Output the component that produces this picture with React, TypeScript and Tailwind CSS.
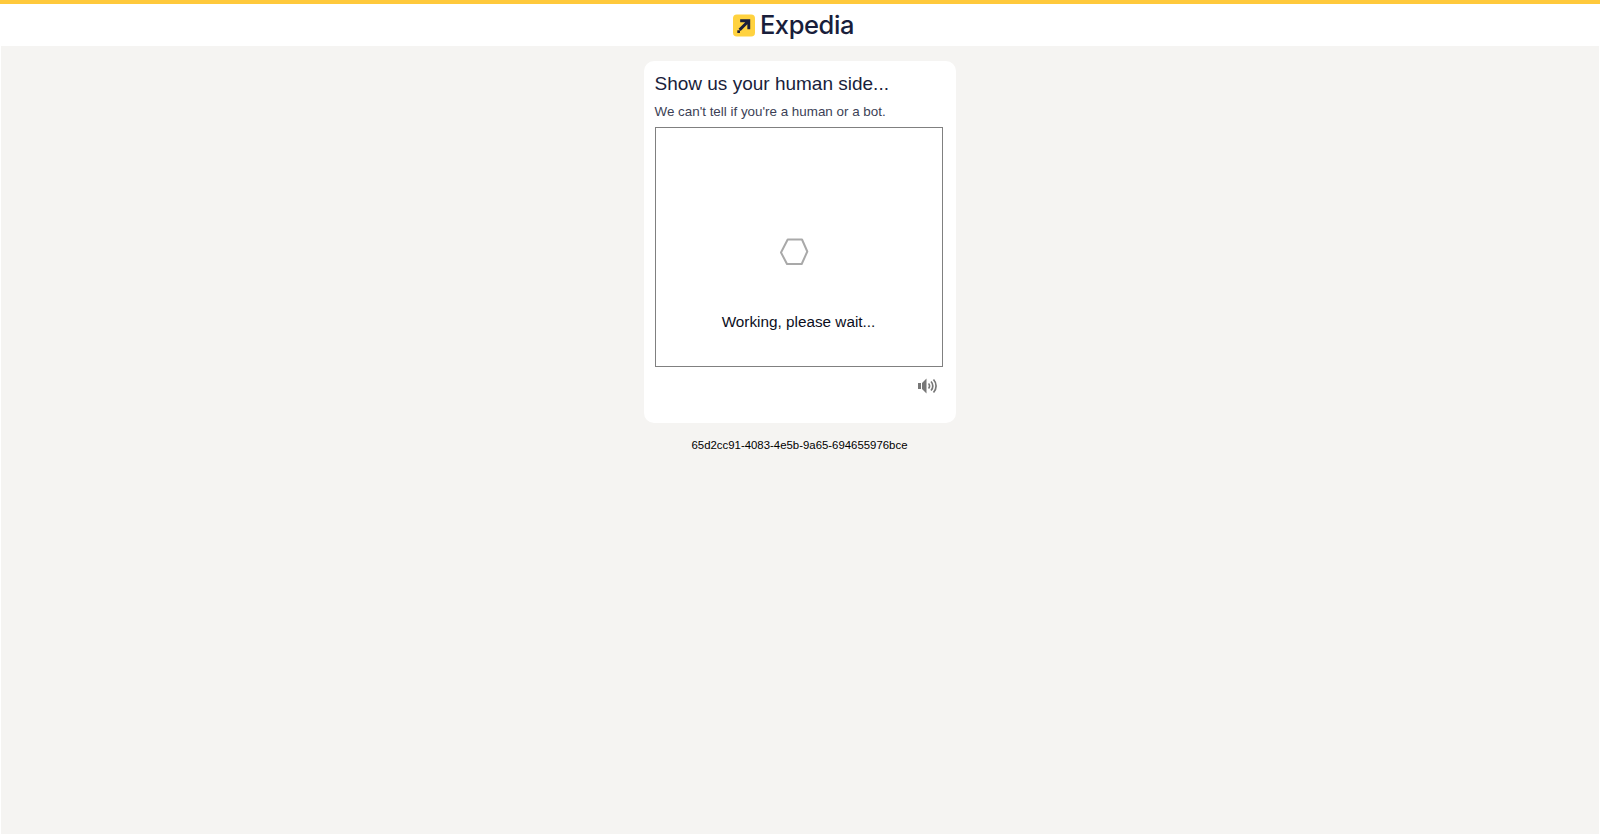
export default function App() {
  return (
    <div className="h-[834px] flex flex-col bg-white font-['Liberation_Sans',Arial,sans-serif] overflow-hidden">
      <div className="h-1 bg-[#ffc93c]" />
      <header className="h-[42px] flex items-center justify-center pr-[13px]">
        <div className="flex items-center">
          <svg width="22" height="23" viewBox="0 0 23 23" className="mr-[5px]">
            <rect x="0" y="0" width="23" height="23" rx="4" fill="#ffd23f" />
            <path d="M7.500 5h10.500v10.500h-3V10.200L8 17.200 5.800 15 12.800 8H7.500z" fill="#191e3b" />
            <rect x="4.500" y="16.500" width="2.800" height="2.800" fill="#191e3b" />
          </svg>
          <span className="font-['Inter',sans-serif] font-medium text-[25.5px] leading-none text-[#191e3b] tracking-[-0.4px] pb-[1px]">Expedia</span>
        </div>
      </header>
      <main className="flex-1 mx-px bg-[#f5f4f2] flex flex-col items-center pt-[15px] pr-px">
        <div className="w-[312px] h-[362px] rounded-[10px] bg-white pl-[11px] pr-[13px] pt-[11px]">
          <h1 className="text-[19px] leading-[24px] text-[#191e3b]">Show us your human side...</h1>
          <p className="mt-[6px] text-[13.4px] leading-[20px] text-[#3c3f56]">We can't tell if you're a human or a bot.</p>
          <div className="mt-[5px] w-[288px] h-[240px] border border-[#808080] flex flex-col items-center">
            <svg width="30" height="28" viewBox="0 0 30 28" className="mt-[110px] mr-[10px]">
              <path d="M8.700 1.500h14.300L28.300 13.500 22.700 26H8L2 14.500z" fill="none" stroke="#a9a9a9" strokeWidth="2" strokeLinejoin="round" />
            </svg>
            <p className="mt-[46px] text-[15.3px] leading-[20px] text-[#0c0e1c]">Working, please wait...</p>
          </div>
          <div className="mt-[10px] flex justify-end pr-[6px]">
            <svg width="20" height="18" viewBox="0 0 20 18" fill="none">
              <rect x="1" y="6" width="3" height="6" fill="#777" />
              <path d="M5 6 9.500 1.500v15L5 12z" fill="#777" />
              <path d="M11.500 6.500a3.500 3.500 0 0 1 0 5M14 4.500a6.500 6.500 0 0 1 0 9M16.500 2.500a9.500 9.500 0 0 1 0 13" stroke="#777" strokeWidth="1.700" />
            </svg>
          </div>
        </div>
        <p className="mt-[13.500px] text-[11.4px] leading-[16px] text-black">65d2cc91-4083-4e5b-9a65-694655976bce</p>
      </main>
    </div>
  );
}
